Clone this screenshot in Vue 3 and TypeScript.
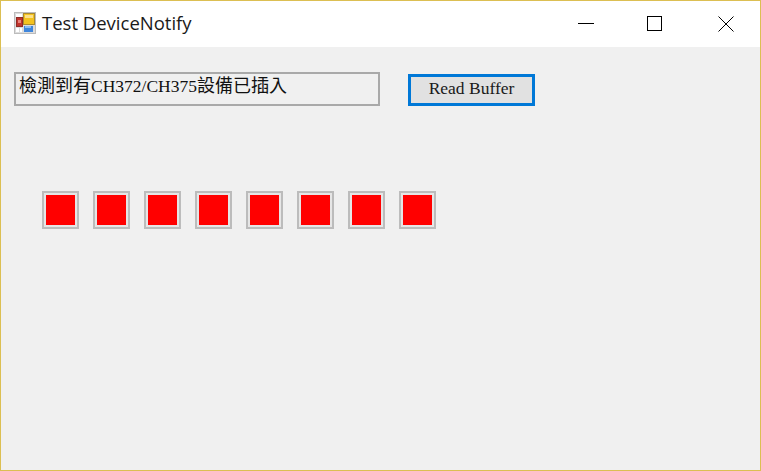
<script setup lang="ts">
const lamps: number[] = [1, 2, 3, 4, 5, 6, 7, 8]
</script>

<template>
  <div class="window">
    <header class="titlebar">
      <svg class="app-icon" width="22" height="22" viewBox="0 0 22 22">
        <rect x="0.5" y="0.5" width="21" height="21" fill="#dcdcdc" stroke="#bcbcbc" />
        <rect x="2" y="2" width="6" height="3" fill="#fff" />
        <rect x="2" y="16" width="3" height="4" fill="#fff" />
        <rect x="6" y="16" width="2" height="4" fill="#fff" />
        <rect x="2.5" y="5.5" width="6" height="9" fill="#c0342c" stroke="#8f2a26" />
        <rect x="4" y="8" width="3" height="3" fill="#e9837c" />
        <rect x="9.5" y="1.5" width="11" height="11" fill="#f4c21f" stroke="#a98a30" />
        <rect x="11" y="3" width="8" height="3" fill="#fbe08a" />
        <rect x="10" y="14" width="9" height="6" fill="#3f86dc" />
        <rect x="11" y="14" width="6" height="2" fill="#8cbcf0" />
      </svg>
      <span class="title">Test DeviceNotify</span>
      <div class="controls">
        <button class="ctl" aria-label="Minimize">
          <svg width="16" height="16" viewBox="0 0 16 16"><path d="M0 7.5H16" stroke="#000" fill="none" /></svg>
        </button>
        <button class="ctl" aria-label="Maximize">
          <svg width="16" height="16" viewBox="0 0 16 16"><rect x="0.5" y="0.5" width="14" height="14" stroke="#000" fill="none" /></svg>
        </button>
        <button class="ctl close" aria-label="Close">
          <svg width="16" height="16" viewBox="0 0 16 16"><path d="M0.5 0.5L15.5 15.5M15.5 0.5L0.5 15.5" stroke="#000" fill="none" /></svg>
        </button>
      </div>
    </header>
    <main class="client">
      <div class="top-row">
        <div class="status">檢測到有<span class="latin">CH372/CH375</span>設備已插入</div>
        <button class="read-btn">Read Buffer</button>
      </div>
      <div class="lamps">
        <div v-for="n in lamps" :key="n" class="lamp"><div class="lamp-fill"></div></div>
      </div>
    </main>
  </div>
</template>

<style>
html, body { margin: 0; padding: 0; background: #f0f0f0; }
</style>

<style scoped>
.window {
  width: 761px;
  height: 471px;
  box-sizing: border-box;
  border: 1px solid #dcbf52;
  background: #f0f0f0;
  display: flex;
  flex-direction: column;
  overflow: hidden;
}
.titlebar {
  height: 46px;
  flex: none;
  background: #fff;
  display: flex;
  align-items: center;
  padding-left: 13px;
}
.app-icon { flex: none; margin-right: 6px; margin-top: -3px; }
.title {
  font-family: "Open Sans", "Noto Sans", sans-serif;
  font-size: 18.5px;
  color: #1a1a1a;
  margin-top: -3px;
}
.controls {
  margin-left: auto;
  display: flex;
  gap: 53px;
  padding-right: 26px;
}
.ctl {
  width: 16px;
  height: 16px;
  border: 0;
  padding: 0;
  background: transparent;
  display: flex;
}
.close { margin-left: 2px; }
.client { flex: 1; display: flex; flex-direction: column; }
.top-row {
  display: flex;
  align-items: flex-end;
  padding: 25px 0 0 13px;
}
.status {
  width: 366px;
  height: 34px;
  box-sizing: border-box;
  border: 2px solid #a9a9a9;
  padding: 1px 3px;
  background: #f0f0f0;
  font-family: "Liberation Serif", "Noto Sans CJK TC", serif;
  font-size: 18px;
  line-height: 22px;
  color: #111;
  white-space: nowrap;
  overflow: hidden;
}
.latin { font-size: 17.5px; }
.read-btn {
  width: 127px;
  height: 32px;
  margin-left: 28px;
  box-sizing: border-box;
  border: 3px solid #0078d7;
  background: #e1e1e1;
  font-family: "Liberation Serif", serif;
  font-size: 17.5px;
  color: #1a1a1a;
  padding: 0 0 4px;
}
.lamps {
  display: flex;
  gap: 14px;
  padding: 85px 0 0 41px;
}
.lamp {
  width: 37px;
  height: 38px;
  box-sizing: border-box;
  border: 2px solid #bcbcbc;
  background: #e6e6e6;
  padding: 2px;
}
.lamp-fill {
  width: 29px;
  height: 30px;
  background: #ff0000;
}
</style>
